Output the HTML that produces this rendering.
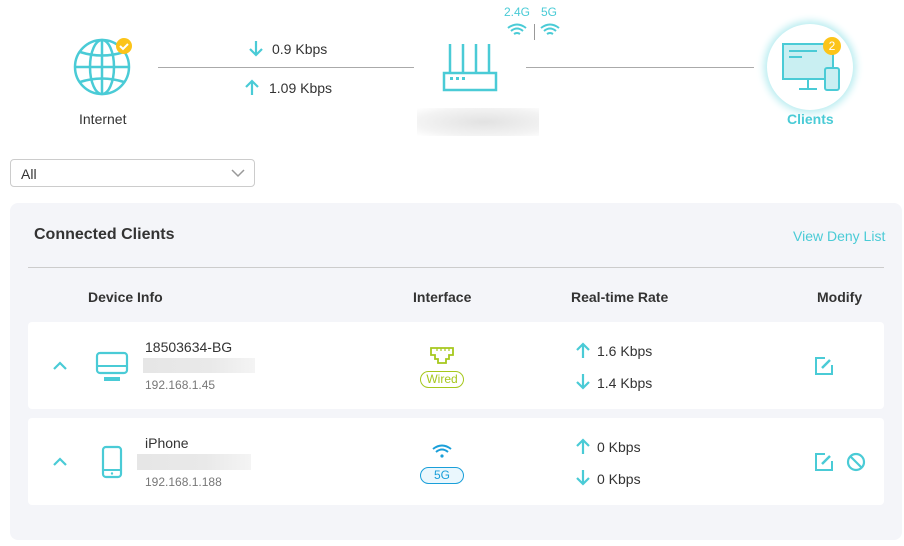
<!DOCTYPE html>
<html><head><meta charset="utf-8"><style>
*{margin:0;padding:0;box-sizing:border-box}
body{width:904px;height:546px;background:#fff;font-family:"Liberation Sans",Arial,sans-serif;color:#333;position:relative;overflow:hidden}
.a{position:absolute}
.t{font-size:14px;white-space:nowrap}
.teal{color:#4acbd6}
.blur{background:linear-gradient(90deg,#e6e6e6,#e9e9e9 60%,#f4f4f4)}
.row{position:absolute;left:28px;width:856px;height:87px;background:#fff;border-radius:4px}
.h{font-weight:bold;font-size:14px;position:absolute;top:289px}
</style></head><body>
<svg width="0" height="0" style="position:absolute"><defs>
<g id="up"><path d="M8 17 V3 M2 9 L8 3 L14 9" stroke="#4acbd6" stroke-width="2.2" fill="none"/></g>
<g id="dn"><path d="M8 1 V15 M2 9 L8 15 L14 9" stroke="#4acbd6" stroke-width="2.2" fill="none"/></g>
</defs></svg>
<!-- top -->
<svg class="a" style="left:72px;top:37px" width="64" height="62" viewBox="0 0 64 62">
<g fill="none" stroke="#4acbd6" stroke-width="2.5">
<circle cx="30" cy="30" r="27"/><ellipse cx="30" cy="30" rx="12" ry="27"/>
<line x1="30" y1="3" x2="30" y2="57"/><line x1="3" y1="30" x2="57" y2="30"/>
<path d="M8 15 Q30 22 52 15 M8 45 Q30 38 52 45"/></g>
<circle cx="52" cy="9" r="8" fill="#fcc419"/><path d="M48 9 l3 3 l5 -5" stroke="#fff" stroke-width="2" fill="none"/>
</svg>
<div class="a t" style="left:79px;top:111px">Internet</div>
<div class="a" style="left:158px;top:67px;width:256px;height:1px;background:#aaa"></div>
<svg class="a" style="left:248px;top:40px" width="16" height="18"><use href="#dn"/></svg>
<div class="a t" style="left:272px;top:41px">0.9 Kbps</div>
<svg class="a" style="left:244px;top:78px" width="16" height="18"><use href="#up"/></svg>
<div class="a t" style="left:269px;top:80px">1.09 Kbps</div>
<svg class="a" style="left:440px;top:42px" width="60" height="52" viewBox="0 0 60 52">
<g stroke="#4acbd6" stroke-width="2.5" fill="none"><line x1="10" y1="2" x2="10" y2="30"/><line x1="23" y1="2" x2="23" y2="30"/><line x1="36" y1="2" x2="36" y2="30"/><line x1="49" y1="2" x2="49" y2="30"/><rect x="4" y="31" width="52" height="17"/></g>
<rect x="10" y="35" width="3" height="3" fill="#4acbd6"/><rect x="16" y="35" width="3" height="3" fill="#4acbd6"/><rect x="22" y="35" width="3" height="3" fill="#4acbd6"/>
</svg>
<div class="a" style="left:504px;top:5px;font-size:12px;color:#4acbd6">2.4G</div>
<div class="a" style="left:541px;top:5px;font-size:12px;color:#4acbd6">5G</div>
<div class="a" style="left:534px;top:24px;width:1px;height:16px;background:#999"></div>
<svg class="a" style="left:507px;top:22px" width="20" height="16" viewBox="0 0 20 16"><g fill="none" stroke="#4acbd6" stroke-width="2"><path d="M1 6 Q10 -1 19 6"/><path d="M4 9 Q10 4 16 9"/><path d="M7 12 Q10 10 13 12"/></g></svg>
<svg class="a" style="left:540px;top:22px" width="20" height="16" viewBox="0 0 20 16"><g fill="none" stroke="#4acbd6" stroke-width="2"><path d="M1 6 Q10 -1 19 6"/><path d="M4 9 Q10 4 16 9"/><path d="M7 12 Q10 10 13 12"/></g></svg>
<div class="a" style="left:417px;top:108px;width:122px;height:28px;background:radial-gradient(ellipse at 55% 50%,#e2e2e2,#f3f3f3 70%,#fff)"></div>
<div class="a" style="left:526px;top:67px;width:228px;height:1px;background:#aaa"></div>
<div class="a" style="left:767px;top:24px;width:86px;height:86px;border-radius:50%;background:#fff;box-shadow:0 0 8px 3px #b7ecf0"></div>
<svg class="a" style="left:781px;top:41px" width="60" height="52" viewBox="0 0 60 52">
<g stroke="#4acbd6" stroke-width="2"><rect x="2" y="3" width="50" height="35" fill="#c9eff2"/><line x1="8" y1="10" x2="36" y2="10"/><line x1="8" y1="16" x2="21" y2="16"/><line x1="18" y1="48" x2="36" y2="48"/><line x1="27" y1="38" x2="27" y2="48"/><rect x="44" y="27" width="14" height="22" rx="2" fill="#c9eff2"/></g>
<circle cx="52" cy="4" r="1" fill="none"/>
</svg>
<div class="a" style="left:823px;top:37px;width:18px;height:18px;border-radius:50%;background:#fcc419;color:#fff;font-size:12px;text-align:center;line-height:18px">2</div>
<div class="a" style="left:787px;top:111px;font-size:14px;font-weight:bold;color:#4acbd6">Clients</div>
<!-- dropdown -->
<div class="a" style="left:10px;top:159px;width:245px;height:28px;border:1px solid #ccc;border-radius:4px"></div>
<div class="a t" style="left:21px;top:166px">All</div>
<svg class="a" style="left:231px;top:169px" width="14" height="9"><path d="M1 1 L7 7 L13 1" stroke="#999" stroke-width="1.5" fill="none"/></svg>
<!-- panel -->
<div class="a" style="left:10px;top:203px;width:892px;height:337px;background:#f4f5f9;border-radius:8px"></div>
<div class="a" style="left:34px;top:226px;font-size:16px;font-weight:bold">Connected Clients</div>
<div class="a t teal" style="left:793px;top:228px">View Deny List</div>
<div class="a" style="left:28px;top:267px;width:856px;height:1px;background:#ccc"></div>
<div class="h" style="left:88px">Device Info</div>
<div class="h" style="left:413px">Interface</div>
<div class="h" style="left:571px">Real-time Rate</div>
<div class="h" style="left:817px">Modify</div>
<div class="row" style="top:322px"></div>
<div class="row" style="top:418px"></div>
<!-- row1 -->
<svg class="a" style="left:52px;top:361px" width="16" height="10"><path d="M2 8 L8 2 L14 8" stroke="#4acbd6" stroke-width="2.2" fill="none"/></svg>
<svg class="a" style="left:95px;top:351px" width="34" height="32"><rect x="2" y="2" width="30" height="20" rx="3" stroke="#4acbd6" stroke-width="2.2" fill="none"/><line x1="2" y1="15" x2="32" y2="15" stroke="#4acbd6" stroke-width="2"/><rect x="9" y="26" width="16" height="4" fill="#4acbd6"/></svg>
<div class="a t" style="left:145px;top:339px">18503634-BG</div>
<div class="a blur" style="left:143px;top:358px;width:112px;height:15px"></div>
<div class="a" style="left:145px;top:378px;font-size:12px;color:#777">192.168.1.45</div>
<svg class="a" style="left:429px;top:346px" width="26" height="20"><path d="M2 2 H24 V9 H20 V13 H17 V17 H9 V13 H6 V9 H2 Z" stroke="#a6c81d" stroke-width="1.8" fill="none"/><path d="M8 2 V5 M12 2 V5 M16 2 V5 M20 2 V5" stroke="#a6c81d" stroke-width="1.2"/></svg>
<div class="a" style="left:420px;top:371px;width:44px;height:17px;border:1.5px solid #a6c81d;border-radius:9px;font-size:12px;color:#a6c81d;text-align:center;line-height:14px">Wired</div>
<svg class="a" style="left:575px;top:341px" width="16" height="18"><use href="#up"/></svg>
<div class="a t" style="left:597px;top:343px">1.6 Kbps</div>
<svg class="a" style="left:575px;top:373px" width="16" height="18"><use href="#dn"/></svg>
<div class="a t" style="left:597px;top:375px">1.4 Kbps</div>
<svg class="a" style="left:814px;top:356px" width="20" height="20"><path d="M11 2 H2 V18 H18 V9" stroke="#4acbd6" stroke-width="2" fill="none"/><path d="M8 12 L16 4" stroke="#4acbd6" stroke-width="2.5"/></svg>
<!-- row2 -->
<svg class="a" style="left:52px;top:457px" width="16" height="10"><path d="M2 8 L8 2 L14 8" stroke="#4acbd6" stroke-width="2.2" fill="none"/></svg>
<svg class="a" style="left:101px;top:445px" width="22" height="34"><rect x="2" y="2" width="18" height="30" rx="3" stroke="#4acbd6" stroke-width="2.2" fill="none"/><line x1="2" y1="25" x2="20" y2="25" stroke="#4acbd6" stroke-width="2"/><circle cx="11" cy="28.5" r="1.2" fill="#4acbd6"/></svg>
<div class="a t" style="left:145px;top:435px">iPhone</div>
<div class="a blur" style="left:137px;top:454px;width:114px;height:16px"></div>
<div class="a" style="left:145px;top:475px;font-size:12px;color:#777">192.168.1.188</div>
<svg class="a" style="left:432px;top:443px" width="20" height="16" viewBox="0 0 20 16"><g fill="none" stroke="#1a9fd9" stroke-width="2"><path d="M1 6 Q10 -1 19 6"/><path d="M4 9 Q10 4 16 9"/></g><circle cx="10" cy="13" r="1.6" fill="#1a9fd9"/></svg>
<div class="a" style="left:420px;top:467px;width:44px;height:17px;border:1.5px solid #1a9fd9;border-radius:9px;background:#eaf7fd;font-size:12px;color:#1a9fd9;text-align:center;line-height:14px">5G</div>
<svg class="a" style="left:575px;top:437px" width="16" height="18"><use href="#up"/></svg>
<div class="a t" style="left:597px;top:439px">0 Kbps</div>
<svg class="a" style="left:575px;top:469px" width="16" height="18"><use href="#dn"/></svg>
<div class="a t" style="left:597px;top:471px">0 Kbps</div>
<svg class="a" style="left:814px;top:452px" width="20" height="20"><path d="M11 2 H2 V18 H18 V9" stroke="#4acbd6" stroke-width="2" fill="none"/><path d="M8 12 L16 4" stroke="#4acbd6" stroke-width="2.5"/></svg>
<svg class="a" style="left:846px;top:452px" width="20" height="20"><circle cx="10" cy="10" r="8" stroke="#4acbd6" stroke-width="2.2" fill="none"/><line x1="4.5" y1="4.5" x2="15.5" y2="15.5" stroke="#4acbd6" stroke-width="2.2"/></svg>
</body></html>
